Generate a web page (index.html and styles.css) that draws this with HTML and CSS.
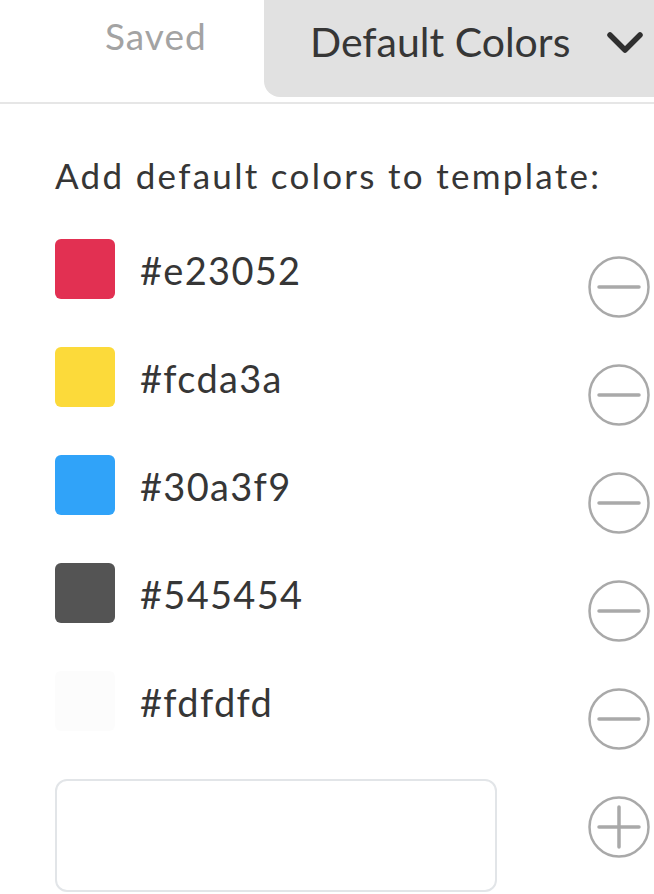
FILE: index.html
```html
<!DOCTYPE html>
<html lang="en">

<head>
  <meta charset="UTF-8">
  <meta name="viewport" content="width=device-width, initial-scale=1.0">
  <title>Default Colors</title>
  <link rel="stylesheet" href="styles.css">
</head>

<body>
  <!-- top tabs -->
  <div class="header">
    <div class="saved">Saved</div>
    <div class="tab">
      <span>Default Colors</span>
      <svg class="chevron" width="38" height="24" viewBox="0 0 38 24">
        <polyline points="4,4 19,19 34,4" fill="none" stroke="#2f2f2f" stroke-width="5.5" stroke-linecap="round" stroke-linejoin="round" />
      </svg>
    </div>
  </div>

  <div class="panel">
    <div class="title">Add default colors to template:</div>

    <div class="list">
      <div class="row">
        <div class="swatch red"></div>
        <div class="hex">#e23052</div>
        <svg class="btn" width="62" height="62" viewBox="0 0 62 62">
          <circle cx="31" cy="31" r="29.5" fill="none" stroke="#a9a9a9" stroke-width="2.5" />
          <line x1="11" y1="31" x2="51" y2="31" stroke="#a9a9a9" stroke-width="3.5" stroke-linecap="round" />
        </svg>
      </div>
      <div class="row">
        <div class="swatch yellow"></div>
        <div class="hex">#fcda3a</div>
        <svg class="btn" width="62" height="62" viewBox="0 0 62 62">
          <circle cx="31" cy="31" r="29.5" fill="none" stroke="#a9a9a9" stroke-width="2.5" />
          <line x1="11" y1="31" x2="51" y2="31" stroke="#a9a9a9" stroke-width="3.5" stroke-linecap="round" />
        </svg>
      </div>
      <div class="row">
        <div class="swatch blue"></div>
        <div class="hex">#30a3f9</div>
        <svg class="btn" width="62" height="62" viewBox="0 0 62 62">
          <circle cx="31" cy="31" r="29.5" fill="none" stroke="#a9a9a9" stroke-width="2.5" />
          <line x1="11" y1="31" x2="51" y2="31" stroke="#a9a9a9" stroke-width="3.5" stroke-linecap="round" />
        </svg>
      </div>
      <div class="row">
        <div class="swatch grey"></div>
        <div class="hex">#545454</div>
        <svg class="btn" width="62" height="62" viewBox="0 0 62 62">
          <circle cx="31" cy="31" r="29.5" fill="none" stroke="#a9a9a9" stroke-width="2.5" />
          <line x1="11" y1="31" x2="51" y2="31" stroke="#a9a9a9" stroke-width="3.5" stroke-linecap="round" />
        </svg>
      </div>
      <div class="row">
        <div class="swatch white"></div>
        <div class="hex">#fdfdfd</div>
        <svg class="btn" width="62" height="62" viewBox="0 0 62 62">
          <circle cx="31" cy="31" r="29.5" fill="none" stroke="#a9a9a9" stroke-width="2.5" />
          <line x1="11" y1="31" x2="51" y2="31" stroke="#a9a9a9" stroke-width="3.5" stroke-linecap="round" />
        </svg>
      </div>

      <!-- new color -->
      <div class="row">
        <input class="newcolor" type="text">
        <svg class="btn" width="62" height="62" viewBox="0 0 62 62">
          <circle cx="31" cy="31" r="29.5" fill="none" stroke="#a9a9a9" stroke-width="2.5" />
          <line x1="11" y1="31" x2="51" y2="31" stroke="#a9a9a9" stroke-width="3.5" stroke-linecap="round" />
          <line x1="31" y1="11" x2="31" y2="51" stroke="#a9a9a9" stroke-width="3.5" stroke-linecap="round" />
        </svg>
      </div>
    </div>
  </div>
</body>

</html>
```

FILE: styles.css
```css
* {
  margin: 0;
  padding: 0;
  box-sizing: border-box;
  font-family: "Lato", "Liberation Sans", sans-serif;
}

body {
  background-color: #fff;
  color: #363636;
  width: 654px;
  overflow: hidden;
}

/* top tabs */
.header {
  display: flex;
  align-items: flex-start;
  height: 104px;
  border-bottom: 2px solid #e6e6e6;
}

.saved {
  width: 264px;
  padding-left: 105px;
  padding-top: 16px;
  font-size: 37px;
  line-height: 40px;
  letter-spacing: 1px;
  color: #a3a3a3;
}

.tab {
  display: flex;
  align-items: flex-start;
  flex: 1;
  height: 97px;
  padding-left: 46px;
  padding-top: 18px;
  background-color: #e1e1e1;
  border-bottom-left-radius: 16px;
  font-size: 41px;
  line-height: 48px;
}

.chevron {
  margin-left: auto;
  margin-right: 10px;
  margin-top: 13px;
}

/* color list */
.panel {
  padding-left: 55px;
  padding-right: 4px;
}

.title {
  margin-top: 50px;
  font-size: 35px;
  line-height: 42px;
  letter-spacing: 2.3px;
  white-space: nowrap;
}

.list {
  display: flex;
  flex-direction: column;
  gap: 29px;
  margin-top: 43px;
}

.row {
  display: flex;
  align-items: flex-start;
}

.swatch {
  width: 60px;
  height: 60px;
  border-radius: 6px;
}

.red {
  background-color: #e23052;
}

.yellow {
  background-color: #fcda3a;
}

.blue {
  background-color: #30a3f9;
}

.grey {
  background-color: #545454;
}

.white {
  background-color: #fcfcfc;
}

.hex {
  margin-left: 25px;
  padding-top: 1px;
  font-size: 38px;
  line-height: 60px;
  letter-spacing: 1.3px;
}

.btn {
  margin-left: auto;
  margin-top: 17px;
}

.newcolor {
  width: 442px;
  height: 113px;
  border: 2px solid #e2e5e8;
  border-radius: 12px;
  outline: none;
}
```
